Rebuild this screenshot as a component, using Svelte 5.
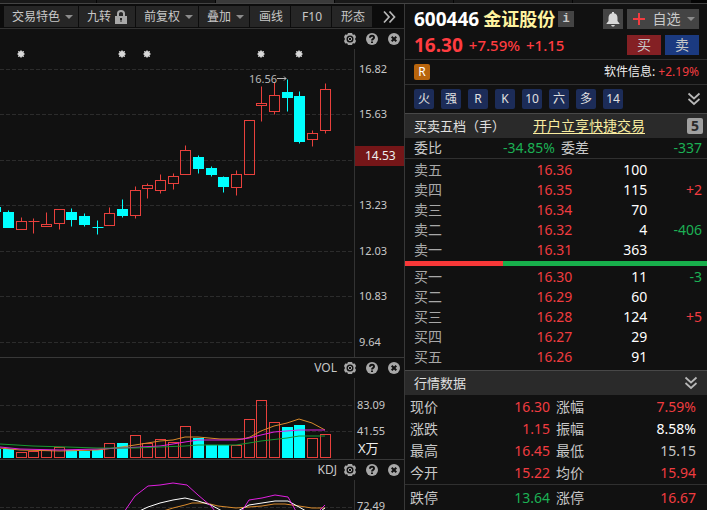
<script lang="ts">
	type Candle = [x: number, high: number, top: number, bottom: number, low: number, up: number];

	const tabs = [1, 2, 3, 4, 5, 6];

	const tools = [
		{ name: "交易特色", menu: true },
		{ name: "九转", lock: true },
		{ name: "前复权", menu: true },
		{ name: "叠加", menu: true },
		{ name: "画线" },
		{ name: "F10" },
		{ name: "形态" }
	];

	const candles: Candle[] = [
		[-5, 158, 158, 162, 162, 0],
		[8, 161, 163, 178, 178, 0],
		[21, 168, 172, 180, 180, 1],
		[33, 169, 172, 172, 184, 1],
		[46, 163, 175, 177, 177, 1],
		[59, 160, 160, 174, 180, 1],
		[71, 159, 163, 170, 177, 0],
		[84, 164, 167, 175, 177, 0],
		[97, 171, 178, 178, 185, 0],
		[109, 158, 164, 176, 176, 1],
		[122, 150, 160, 166, 168, 0],
		[135, 137, 141, 166, 169, 1],
		[147, 134, 136, 139, 149, 1],
		[160, 125, 131, 141, 144, 1],
		[173, 124, 127, 134, 140, 1],
		[185, 96, 101, 125, 125, 1],
		[198, 106, 108, 119, 124, 0],
		[211, 117, 119, 125, 127, 0],
		[223, 127, 128, 137, 143, 0],
		[236, 121, 125, 138, 146, 1],
		[249, 71, 71, 125, 125, 1],
		[261, 37, 54, 56, 72, 1],
		[274, 33, 46, 62, 65, 1],
		[287, 30, 43, 48, 62, 0],
		[299, 42, 47, 92, 94, 0],
		[312, 81, 84, 90, 97, 1],
		[325, 34, 40, 81, 84, 1]
	];

	// top edge of every volume bar, same order as candles
	const volumes = [
		71, 71, 74, 73, 72, 69, 72, 73, 72, 65, 65, 57, 65, 61, 64, 48, 60, 67, 67, 67, 41, 22, 44, 49, 47,
		60, 56
	];

	const events = [21, 122, 147, 261, 299];

	const priceAxis = [
		{ y: 20, label: "16.82" },
		{ y: 65, label: "15.63" },
		{ y: 111, label: "" },
		{ y: 156, label: "13.23" },
		{ y: 202, label: "12.03" },
		{ y: 247, label: "10.83" },
		{ y: 293, label: "9.64" }
	];

	const volumeAxis = [
		{ y: 27, label: "83.09" },
		{ y: 53, label: "41.55" }
	];

	const chips = ["火", "强", "R", "K", "10", "六", "多", "14"];

	const asks = [
		["卖五", "16.36", "100", ""],
		["卖四", "16.35", "115", "+2"],
		["卖三", "16.34", "70", ""],
		["卖二", "16.32", "4", "-406"],
		["卖一", "16.31", "363", ""]
	];

	const bids = [
		["买一", "16.30", "11", "-3"],
		["买二", "16.29", "60", ""],
		["买三", "16.28", "124", "+5"],
		["买四", "16.27", "29", ""],
		["买五", "16.26", "91", ""]
	];

	const ratio = -34.85;
	const buyShare = (100 + ratio) / 2;

	const quotes = [
		["现价", "16.30", "up"],
		["涨幅", "7.59%", "up"],
		["涨跌", "1.15", "up"],
		["振幅", "8.58%", "flat"],
		["最高", "16.45", "up"],
		["最低", "15.15", "soft"],
		["今开", "15.22", "up"],
		["均价", "15.94", "up"]
	];

	const limits = [
		["跌停", "13.64", "down"],
		["涨停", "16.67", "up"]
	];
</script>

{#snippet paneHead(title: string)}
	<div class="pane-head">
		{#if title}<span>{title}</span>{/if}
		<button title="设置">
			<svg width="12" height="12" viewBox="0 0 12 12">
				<path class="fill" fill-rule="evenodd" d="M4 0h4l.8 1.700 2-.2L12 4l-1 2 1 2-1.200 2.500-2-.2L8 12H4l-.8-1.700-2 .2L0 8l1-2-1-2 1.200-2.500 2 .2zM6 2.500a3.500 3.500 0 1 0 0 7 3.500 3.500 0 0 0 0-7z" />
				<circle class="ring" cx="6" cy="6" r="1.700" />
			</svg>
		</button>
		<button title="帮助">
			<svg width="12" height="12" viewBox="0 0 12 12">
				<circle class="fill" cx="6" cy="6" r="6" />
				<path class="cut" d="M4 4.700C4 2 8 2 8 4.500 8 6 6 5.900 6 7.500M6 8.500v1.500" />
			</svg>
		</button>
		<button title="关闭">
			<svg width="12" height="12" viewBox="0 0 12 12">
				<circle class="fill" cx="6" cy="6" r="6" />
				<path class="cut" d="M3.700 3.700l4.600 4.600M8.300 3.700L3.700 8.300" />
			</svg>
		</button>
	</div>
{/snippet}

{#snippet book(rows: string[][], label: string)}
	<table aria-label={label}>
		<tbody>
			{#each rows as [name, price, amount, change]}
				<tr>
					<th scope="row">{name}</th>
					<td class="price up">{price}</td>
					<td class="amount">{amount}</td>
					<td class={change.startsWith("-") ? "down" : "up"}>{change}</td>
				</tr>
			{/each}
		</tbody>
	</table>
{/snippet}

{#snippet pairs(rows: string[][])}
	<dl class="pairs">
		{#each rows as [name, value, tone]}
			<div>
				<dt>{name}</dt>
				<dd class={tone}>{value}</dd>
			</div>
		{/each}
	</dl>
{/snippet}

{#snippet chevrons()}
	<svg width="14" height="14" viewBox="0 0 14 14">
		<path class="chevron" d="M1.500 1.500L7 6.500l5.500-5M1.500 7L7 12l5.500-5" />
	</svg>
{/snippet}

<div class="app">
	<div class="tabs">
		{#each tabs as tab}
			<span class:active={tab === 3}></span>
		{/each}
	</div>

	<div class="main">
		<section class="charts">
			<div class="toolbar">
				{#each tools as tool}
					<button class="tool">
						{tool.name}
						{#if tool.menu}<i class="caret"></i>{/if}
						{#if tool.lock}
							<svg class="lock" width="12" height="14" viewBox="0 0 12 14">
								<path class="shackle" d="M3 7V3.500Q3 1 6 1t3 2.500V7" />
								<path class="fill" fill-rule="evenodd" d="M0 6h12v8H0zM5 8v2h.5v2h1v-2H7V8z" />
							</svg>
						{/if}
					</button>
				{/each}
				<button class="more" title="更多">
					<svg width="14" height="14" viewBox="0 0 14 14">
						<path class="chevron" d="M2 1.500L7 7l-5 5.500M7.500 1.500l5 5.500-5 5.500" />
					</svg>
				</button>
			</div>

			<div class="pane">
				{@render paneHead("")}
				<div class="plot price-plot">
					<svg class="canvas">
						{#each priceAxis as tick}
							<line class="grid" x1="0" x2="100%" y1={tick.y} y2={tick.y} />
						{/each}
						{#each events as x}
							<g class="event" transform="translate({x} 5)">
								<path d="M-4 0h8M0-4v8M-3-3l6 6M3-3l-6 6" />
								<circle r="3" />
							</g>
						{/each}
						<g transform="translate(0.5 0.5)">
							{#each candles as [x, high, top, bottom, low, up]}
								<g class="candle" class:rise={up}>
									<path d="M{x} {high}V{top}M{x} {bottom}V{low}" />
									{#if top === bottom}
										<path d="M{x - 5} {top}h11" />
									{:else}
										<rect x={x - 5} y={top} width="10" height={bottom - top} />
									{/if}
								</g>
							{/each}
						</g>
						<text class="peak" x="249" y="34">16.56</text>
						<path class="arrow" d="M277 29.500h9M284 27.500l2 2-2 2" />
					</svg>
					<svg class="axis">
						{#each priceAxis as tick}
							<text x="4" y={tick.y + 4}>{tick.label}</text>
						{/each}
						<rect class="tag" x="0" y="97" width="100%" height="20" />
						<text class="tag-text" x="10" y="111">14.53</text>
					</svg>
				</div>
			</div>

			<div class="pane">
				{@render paneHead("VOL")}
				<div class="plot volume-plot">
					<svg class="canvas">
						{#each volumeAxis as tick}
							<line class="grid" x1="0" x2="100%" y1={tick.y} y2={tick.y} />
						{/each}
						<g transform="translate(0.5 0.5)">
							{#each volumes as top, i}
								<g class="candle" class:rise={candles[i][5]}>
									<rect x={candles[i][0] - 5} y={top} width="10" height={79 - top} />
								</g>
							{/each}
						</g>
						<polyline class="orange" points="0,70 20,72 60,73 97,72 115,70 135,67 160,63 173,62 185,59 198,59 220,61 243,61 250,59 261,53 274,48 287,45 299,41 312,45 325,52" />
						<polyline class="magenta" points="0,69 20,71 60,72 97,71 122,70 160,68 173,66 185,64 198,62 236,62 249,60 261,57 274,54 299,52 325,52" />
						<polyline class="green" points="0,66 33,68 67,69 97,70 135,70 160,69 185,68 198,67 236,67 249,65 261,63 287,60 299,58 325,58" />
					</svg>
					<svg class="axis">
						{#each volumeAxis as tick}
							<text x="2" y={tick.y + 4}>{tick.label}</text>
						{/each}
						<text class="unit" x="3" y="75">X万</text>
					</svg>
				</div>
			</div>

			<div class="pane">
				{@render paneHead("KDJ")}
				<div class="plot kdj-plot">
					<svg class="canvas">
						<line class="grid" x1="0" x2="100%" y1="27" y2="27" />
						<polyline class="orange" points="160,32 173,28 185,25 192,23 206,23 218,26 236,28 249,27 262,26 274,24 285,24 299,26 312,28 325,28" />
						<polyline class="white" points="135,33 148,27 160,23 173,20 185,18 198,21 211,25 222,31 236,32 249,25 262,23 275,21 288,21 299,27 306,31 318,33 325,28" />
						<polyline class="magenta" points="124,32 135,16 148,6 160,5 173,3 187,5 198,15 211,26 222,40 240,34 249,20 262,18 275,15 288,17 297,33 318,32 325,25" />
					</svg>
					<svg class="axis">
						<text x="2" y="30">72.49</text>
					</svg>
				</div>
			</div>
		</section>

		<aside class="side">
			<header class="stock">
				<div class="line">
					<strong class="code">600446</strong>
					<strong class="name">金证股份</strong>
					<span class="info">i</span>
					<button class="bell" title="预警">
						<svg width="16" height="16" viewBox="0 0 16 16">
							<path class="bell-shape" d="M7 1h2v1.200Q12.500 3 12.500 7v3l2 2.500v.5h-13v-.5l2-2.500V7Q3.500 3 7 2.200zM6 14h4l-1 1.500H7z" />
						</svg>
					</button>
					<button class="watch">
						<svg width="12" height="12" viewBox="0 0 12 12">
							<path class="plus" d="M0 6h12M6 0v12" />
						</svg>
						自选
						<i class="caret"></i>
					</button>
				</div>
				<div class="line">
					<strong class="last">16.30</strong>
					<span class="delta">+7.59%</span>
					<span class="delta">+1.15</span>
					<button class="trade buy">买</button>
					<button class="trade sell">卖</button>
				</div>
			</header>

			<div class="sector">
				<span class="margin-badge">R</span>
				<a href="#sector">软件信息: <span class="up">+2.19%</span></a>
			</div>

			<div class="chips">
				{#each chips as chip}
					<button class="chip">{chip}</button>
				{/each}
				<button class="expand" title="展开">{@render chevrons()}</button>
			</div>

			<div class="bar">
				<h2>买卖五档（手）</h2>
				<a class="open" href="#open">开户立享快捷交易</a>
				<button class="levels">5</button>
			</div>

			<dl class="pairs ratio">
				<div>
					<dt>委比</dt>
					<dd class="down">{ratio}%</dd>
				</div>
				<div>
					<dt>委差</dt>
					<dd class="down">-337</dd>
				</div>
			</dl>

			<div class="book">{@render book(asks, "卖盘")}</div>
			<div class="balance"><div style="width: {buyShare}%"></div></div>
			<div class="book bids">{@render book(bids, "买盘")}</div>

			<div class="bar">
				<h2>行情数据</h2>
				<button class="expand" title="展开">{@render chevrons()}</button>
			</div>
			<div class="quotes">{@render pairs(quotes)}</div>
			<div class="quotes limits">{@render pairs(limits)}</div>
		</aside>
	</div>
</div>

<style>
	:global(body) {
		background: #111;
	}

	.app {
		font-family: "Noto Sans", "Noto Sans CJK SC", sans-serif;
		font-size: 14px;
		line-height: 20px;
		color: #c8c8c8;
		background: #111;
	}

	button {
		font: inherit;
		color: inherit;
		background: none;
		border: 0;
		padding: 0;
		cursor: pointer;
	}

	svg {
		display: block;
		flex: none;
	}

	.tabs {
		display: flex;
		gap: 1px;
		height: 3px;
		overflow: hidden;
		background: #050505;
		border-bottom: 1px solid #444;
	}

	.tabs span {
		flex: 0 0 118px;
		background: #191919;
	}

	.tabs span:first-child {
		flex-basis: 96px;
	}

	.tabs .active {
		background: #3a3a3a;
	}

	.main {
		display: grid;
		grid-template-columns: minmax(0, 4fr) minmax(0, 3fr);
	}

	/* toolbar */

	.toolbar {
		display: flex;
		gap: 1px;
		padding: 2px 0 1px 4px;
		background: #0c0c0c;
		border-bottom: 1px solid #333;
	}

	.tool {
		display: flex;
		align-items: center;
		justify-content: center;
		gap: 6px;
		min-width: 40px;
		height: 21px;
		padding: 0 6px 0 8px;
		font-size: 12px;
		white-space: nowrap;
		background: #262626;
	}

	.caret {
		border: 4px solid transparent;
		border-top-color: #8c8c8c;
		border-bottom: 0;
		margin: 0 -1px;
	}

	.lock {
		margin: 0 2px 0 -2px;
	}

	.more {
		margin-left: 9px;
	}

	.fill {
		fill: #a8a8a8;
	}

	.shackle {
		fill: none;
		stroke: #a8a8a8;
		stroke-width: 2;
	}

	.ring {
		fill: none;
		stroke: #a8a8a8;
		stroke-width: 1;
	}

	.cut {
		fill: none;
		stroke: #111;
		stroke-width: 2;
	}

	.chevron {
		fill: none;
		stroke: #b8b8b8;
		stroke-width: 1.7;
	}

	/* charts */

	.pane + .pane {
		border-top: 1px solid #383838;
	}

	.pane-head {
		display: flex;
		align-items: center;
		justify-content: flex-end;
		gap: 10px;
		height: 20px;
		padding-right: 4px;
		font-size: 12px;
	}

	.pane-head span {
		margin-right: -3px;
	}

	.plot {
		display: grid;
		grid-template-columns: minmax(0, 1fr) 50px;
	}

	.price-plot {
		height: 308px;
	}

	.volume-plot {
		height: 81px;
	}

	.kdj-plot {
		height: 30px;
	}

	.canvas,
	.axis {
		width: 100%;
		height: 100%;
		overflow: hidden;
	}

	.axis {
		box-sizing: border-box;
		border-left: 1px solid #333;
		fill: #c8c8c8;
		font-size: 11px;
	}

	.grid {
		stroke: #2c2c2c;
		stroke-dasharray: 4 2;
		shape-rendering: crispEdges;
	}

	.candle {
		fill: #00ffff;
		stroke: #00ffff;
	}

	.candle.rise {
		fill: none;
		stroke: #e8403c;
	}

	.event path {
		stroke: #b0b0b0;
	}

	.event circle {
		fill: #d8d8d8;
	}

	.peak {
		fill: #b8b8b8;
		font-size: 11px;
	}

	.arrow {
		fill: none;
		stroke: #b8b8b8;
	}

	.tag {
		fill: #751618;
	}

	.tag-text {
		fill: #eee;
		font-size: 12px;
	}

	.unit {
		fill: #eee;
		font-size: 13px;
	}

	polyline {
		fill: none;
		stroke-width: 1;
	}

	.orange {
		stroke: #d88a2c;
	}

	.magenta {
		stroke: #e020e0;
	}

	.green {
		stroke: #189830;
	}

	.white {
		stroke: #fff;
	}

	/* side panel */

	.side {
		border-left: 1px solid #383838;
	}

	.up {
		color: #f03c40;
	}

	.down {
		color: #1cb054;
	}

	.flat {
		color: #fff;
	}

	.stock {
		display: grid;
		gap: 6px;
		padding: 5px 8px 4px 9px;
		border-bottom: 1px solid #303030;
	}

	.line {
		display: flex;
		align-items: center;
		height: 20px;
		white-space: nowrap;
	}

	.code {
		font-size: 19px;
		color: #fff;
	}

	.name {
		margin-left: 4px;
		font-size: 18px;
		color: #fff3a0;
	}

	.info {
		width: 16px;
		margin-left: 3px;
		font: bold 12px/16px "Liberation Mono", monospace;
		text-align: center;
		background: #444;
	}

	.bell {
		display: grid;
		place-content: center;
		width: 20px;
		height: 20px;
		margin-left: auto;
		background: #444;
	}

	.bell-shape {
		fill: #d8d8d8;
	}

	.watch {
		display: flex;
		align-items: center;
		justify-content: space-between;
		width: 72px;
		height: 20px;
		margin-left: 4px;
		padding: 0 5px 0 6px;
		background: #444;
	}

	.plus {
		stroke: #f03c40;
		stroke-width: 2;
	}

	.last {
		font-size: 19px;
		color: #ff3c40;
	}

	.delta {
		margin-left: 6px;
		font-size: 15px;
		font-weight: 500;
		color: #ff3c40;
	}

	.trade {
		width: 34px;
		height: 20px;
		margin-left: 4px;
	}

	.buy {
		margin-left: auto;
		background: #842024;
	}

	.sell {
		background: #1b3a80;
	}

	.sector {
		display: flex;
		align-items: center;
		justify-content: space-between;
		height: 24px;
		padding: 0 8px 0 9px;
		font-size: 12px;
		border-bottom: 1px solid #303030;
	}

	.sector a {
		color: #eee;
		text-decoration: none;
	}

	.margin-badge {
		width: 16px;
		line-height: 16px;
		color: #fff;
		text-align: center;
		background: #b8640c;
		border-radius: 2px;
	}

	.chips {
		display: flex;
		gap: 7px;
		padding: 4px 6px 4px 9px;
	}

	.chip {
		width: 20px;
		height: 20px;
		font-size: 12px;
		color: #e0e0e0;
		background: #1c2c58;
		border-radius: 2px;
	}

	.expand {
		margin-left: auto;
	}

	.bar {
		display: flex;
		align-items: center;
		gap: 28px;
		height: 24px;
		padding: 0 4px 0 9px;
		background: #2a2a2a;
		border-top: 1px solid #484848;
	}

	.bar .expand {
		margin-right: 5px;
	}

	h2 {
		margin: 0;
		font-size: 13px;
		font-weight: 400;
		color: #e0e0e0;
		white-space: nowrap;
	}

	.open {
		color: #f8eca0;
		white-space: nowrap;
		text-underline-offset: 2px;
	}

	.levels {
		width: 16px;
		height: 16px;
		margin-left: auto;
		font-weight: bold;
		line-height: 16px;
		color: #2a2a2a;
		background: #a0a0a0;
		border-radius: 2px;
	}

	.pairs {
		display: grid;
		grid-template-columns: 1fr 1fr;
		column-gap: 6px;
		margin: 0;
	}

	.pairs div {
		display: flex;
		justify-content: space-between;
	}

	dd {
		margin: 0;
	}

	.ratio {
		padding: 0 5px 0 9px;
		border-bottom: 1px solid #303030;
	}

	.book {
		padding: 1px 5px 1px 9px;
	}

	.bids {
		padding-bottom: 3px;
	}

	table {
		width: 100%;
		table-layout: fixed;
		border-collapse: collapse;
	}

	th,
	td {
		height: 20px;
		padding: 0;
		font-weight: 400;
		text-align: right;
	}

	th {
		width: 20%;
		color: #a8a8a8;
		text-align: left;
	}

	.price {
		width: 35%;
	}

	.amount {
		width: 26%;
		color: #fff;
	}

	.balance {
		height: 5px;
		background: #18b04c;
	}

	.balance div {
		height: 100%;
		background: #f83838;
	}

	.quotes {
		padding: 1px 11px 0 5px;
		line-height: 22px;
	}

	.limits {
		padding-top: 2px;
		border-top: 1px solid #303030;
	}
</style>
